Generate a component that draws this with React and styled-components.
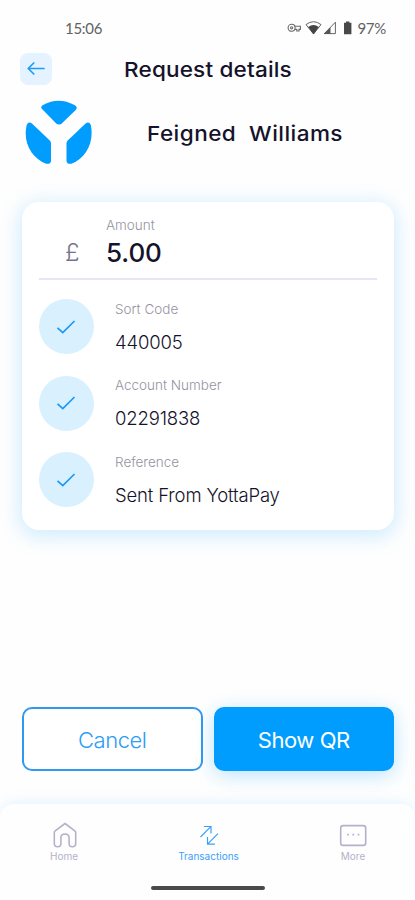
import React, { useState } from "react";
import styled, { createGlobalStyle } from "styled-components";

const details = [
  { label: "Sort Code", value: "440005" },
  { label: "Account Number", value: "02291838" },
  { label: "Reference", value: "Sent From YottaPay" },
];

const tabs = [
  { name: "Home", icon: <HomeIcon /> },
  { name: "Transactions", icon: <TransferIcon /> },
  { name: "More", icon: <MoreIcon /> },
];

function HomeIcon() {
  return (
    <svg width="26" height="28" viewBox="0 0 26 28" fill="none" stroke="currentColor" strokeWidth="1.6" strokeLinejoin="round">
      <path d="M3.3 11.8 Q3.3 10.6 4.2 9.9 L14 2.5 L23.8 9.9 Q24.7 10.6 24.7 11.8 V22.5 Q24.7 25.8 21.4 25.8 Q18.1 25.8 18.1 22.5 V16.8 Q18.1 13 14 13 Q9.9 13 9.9 16.8 V22.5 Q9.9 25.8 6.6 25.8 Q3.3 25.8 3.3 22.5 Z" />
    </svg>
  );
}

function TransferIcon() {
  return (
    <svg width="26" height="28" viewBox="0 0 26 28" fill="none" stroke="currentColor" strokeWidth="1.2">
      <path d="M4.5 16 L14.8 5.7 M7.8 5.5 H15 V12.5" />
      <path d="M22 12.7 L11.8 22.9 M11.5 16 V23.2 H18.8" />
    </svg>
  );
}

function MoreIcon() {
  return (
    <svg width="28" height="28" viewBox="0 0 28 28" fill="none" stroke="currentColor" strokeWidth="1.6">
      <rect x="1.7" y="4.6" width="25" height="19.8" rx="2.5" />
      <path d="M8.2 13.6 h1.7 M13.4 13.6 h1.7 M18.6 13.6 h1.7" strokeWidth="1.7" />
    </svg>
  );
}

function Logo() {
  return (
    <svg width="68" height="68" viewBox="0 0 68 68" fill="#009dff">
      <path d="M17.3 10.3 Q15 7.9 18 6 Q33.5 -2.5 49.5 6 Q53.2 8 50.7 10.9 L37 24.2 Q34 26.7 31 24.2 Z" />
      <path d="M1.7 26 Q3.5 22 7.2 24.7 L24.8 41.5 Q26 42.7 26 44.5 V62 Q25.8 65.3 21 64.8 C7 59 -2.5 44 1.7 26 Z" />
      <path d="M65.8 26 Q64 22 60.3 24.7 L42.7 41.5 Q41.5 42.7 41.5 44.5 V62 Q41.7 65.3 46.5 64.8 C60.5 59 69.5 44 65.8 26 Z" />
    </svg>
  );
}

function StatusIcons() {
  return (
    <svg width="68" height="16" viewBox="0 0 68 16">
      <g fill="none" stroke="#6a6a6a" strokeWidth="1.1">
        <circle cx="4.6" cy="7.8" r="3.5" />
        <circle cx="4.6" cy="7.8" r="1.1" />
        <path d="M7.8 6.2 H13.4 V9.4 H12 V11 H9.8 V9.4 H7.8" />
      </g>
      <path d="M19 4.6 Q26.5 -1.2 34 4.6 L26.5 14 Z" fill="none" stroke="#666" strokeWidth="1" />
      <path d="M21.2 7 Q26.5 3 31.8 7 L26.5 14.2 Z" fill="#444" />
      <path d="M37.4 13.6 L48.4 2.2 V13.6 Z" fill="none" stroke="#666" strokeWidth="1" />
      <path d="M36.6 14 L43.5 7.2 V14 Z" fill="#555" />
      <path d="M57 2.7 H59 V1.4 H62.4 V2.7 H64.4 V14.3 H57 Z" fill="#484848" />
    </svg>
  );
}

export default function App() {
  const [active, setActive] = useState("Transactions");

  return (
    <Screen>
      <GlobalStyle />
      <StatusBar>
        <span>15:06</span>
        <div className="right">
          <StatusIcons />
          <span>97%</span>
        </div>
      </StatusBar>
      <Header>
        <BackButton aria-label="Back">
          <svg width="20" height="16" viewBox="0 0 20 16" fill="none" stroke="#1d9dfa" strokeWidth="1.7" strokeLinecap="round" strokeLinejoin="round">
            <path d="M18 7.5 H2.5 M7.8 2 L2.2 7.5 L7.8 13" />
          </svg>
        </BackButton>
        <h1>Request details</h1>
      </Header>
      <Payee>
        <Logo />
        <h2>Feigned&nbsp; Williams</h2>
      </Payee>
      <Card>
        <AmountRow>
          <Currency>£</Currency>
          <div>
            <Label>Amount</Label>
            <Amount>5.00</Amount>
          </div>
        </AmountRow>
        <DetailList>
          {details.map((item) => (
            <DetailRow key={item.label}>
              <Check>
                <svg width="20" height="16" viewBox="0 0 20 16" fill="none" stroke="#1d98f5" strokeWidth="1.7">
                  <path d="M1.5 8.8 L6.8 13.6 L18.5 2" />
                </svg>
              </Check>
              <div>
                <Label>{item.label}</Label>
                <Value>{item.value}</Value>
              </div>
            </DetailRow>
          ))}
        </DetailList>
      </Card>
      <Actions>
        <Button>Cancel</Button>
        <Button $primary>Show QR</Button>
      </Actions>
      <TabBar>
        <Tabs>
          {tabs.map((tab) => (
            <Tab key={tab.name} $active={active === tab.name} onClick={() => setActive(tab.name)}>
              {tab.icon}
              <span>{tab.name}</span>
            </Tab>
          ))}
        </Tabs>
        <HomeIndicator />
      </TabBar>
    </Screen>
  );
}

const GlobalStyle = createGlobalStyle`
  * {
    box-sizing: border-box;
  }
  body {
    margin: 0;
    background: #fefefe;
  }
  h1, h2, p {
    margin: 0;
  }
  button {
    font-family: inherit;
    padding: 0;
    border: none;
    background: none;
  }
  svg {
    display: block;
    flex-shrink: 0;
  }
`;

const Screen = styled.main`
  display: flex;
  flex-direction: column;
  width: 415px;
  height: 900px;
  overflow: hidden;
  background: #fefefe;
  font-family: Inter, "Liberation Sans", sans-serif;
  color: #15132b;
  /* wide headings */
  h1, h2 {
    font-size: 20.5px;
    font-weight: 500;
    white-space: nowrap;
    transform: scaleX(1.1);
    transform-origin: left center;
  }
`;

const StatusBar = styled.div`
  display: flex;
  justify-content: space-between;
  align-items: center;
  height: 53px;
  padding: 2px 29px 0 65px;
  font-family: Lato, sans-serif;
  font-size: 15px;
  letter-spacing: -0.3px;
  color: #626262;
  .right {
    display: flex;
    align-items: center;
    gap: 2px;
  }
`;

const Header = styled.header`
  display: flex;
  align-items: center;
  height: 32px;
  padding-left: 20px;
  h1 {
    margin-left: 72px;
    letter-spacing: 0.15px;
  }
`;

const BackButton = styled.button`
  display: grid;
  place-items: center;
  width: 32px;
  height: 32px;
  border-radius: 8px;
  background: #e4f3ff;
`;

const Payee = styled.section`
  display: flex;
  align-items: center;
  height: 68px;
  margin-top: 14px;
  padding-left: 25px;
  h2 {
    margin-left: 54px;
    letter-spacing: 0.4px;
  }
`;

const Card = styled.section`
  height: 328px;
  margin: 35px 21px 0 22px;
  padding: 0 17px;
  border-radius: 17px;
  background: #fff;
  box-shadow: 0 4px 20px 3px rgba(0, 157, 255, 0.18);
`;

const AmountRow = styled.div`
  display: flex;
  height: 78px;
  padding-top: 14px;
  border-bottom: 2px solid #e7e4f6;
`;

const Currency = styled.span`
  width: 67px;
  padding: 22px 0 0 26px;
  font-size: 24px;
  font-weight: 300;
  line-height: 30px;
  color: #77728c;
`;

const Label = styled.p`
  font-size: 13.5px;
  font-weight: 300;
  line-height: 18px;
  color: #96939f;
`;

const Amount = styled.p`
  margin-top: 3px;
  font-size: 26px;
  font-weight: 500;
  line-height: 32px;
  letter-spacing: -0.1px;
`;

const DetailList = styled.div`
  display: flex;
  flex-direction: column;
  gap: 21.5px;
  padding-top: 19px;
`;

const DetailRow = styled.div`
  display: flex;
  align-items: center;
  gap: 21px;
  height: 55px;
`;

const Check = styled.div`
  display: grid;
  place-items: center;
  width: 55px;
  height: 55px;
  padding-right: 1px;
  border-radius: 50%;
  background: #d9f0ff;
`;

const Value = styled.p`
  margin-top: 12px;
  font-size: 18.5px;
  font-weight: 300;
  line-height: 24px;
  letter-spacing: -0.15px;
`;

const Actions = styled.div`
  display: grid;
  grid-template-columns: 1fr 1fr;
  gap: 11px;
  margin: 177px 21px 0 22px;
`;

const Button = styled.button`
  height: 64px;
  padding-top: 1px;
  border: 2px solid ${(props) => (props.$primary ? "#009dff" : "#3098ef")};
  border-radius: 10px;
  background: ${(props) => (props.$primary ? "#009dff" : "#fff")};
  color: ${(props) => (props.$primary ? "#fff" : "#2d9cf2")};
  font-size: 22px;
  font-weight: ${(props) => (props.$primary ? 400 : 300)};
  letter-spacing: -0.45px;
  box-shadow: ${(props) => (props.$primary ? "0 4px 20px rgba(0, 157, 255, 0.28)" : "none")};
`;

const TabBar = styled.nav`
  display: flex;
  flex-direction: column;
  align-items: center;
  flex: 1;
  margin-top: 33px;
  border-radius: 14px 14px 0 0;
  background: #fefefe;
  box-shadow: 0 -2px 14px rgba(0, 157, 255, 0.1);
`;

const Tabs = styled.div`
  display: flex;
  justify-content: space-between;
  width: 100%;
  padding: 17px 12px 0 14px;
`;

const Tab = styled.button`
  display: flex;
  flex-direction: column;
  align-items: center;
  width: 100px;
  color: ${(props) => (props.$active ? "#3ba0f8" : "#b3b2ca")};
  span {
    font-size: 10px;
    line-height: 14px;
  }
`;

const HomeIndicator = styled.div`
  width: 114px;
  height: 4px;
  margin-top: 23px;
  border-radius: 2px;
  background: #4a4a4a;
`;
